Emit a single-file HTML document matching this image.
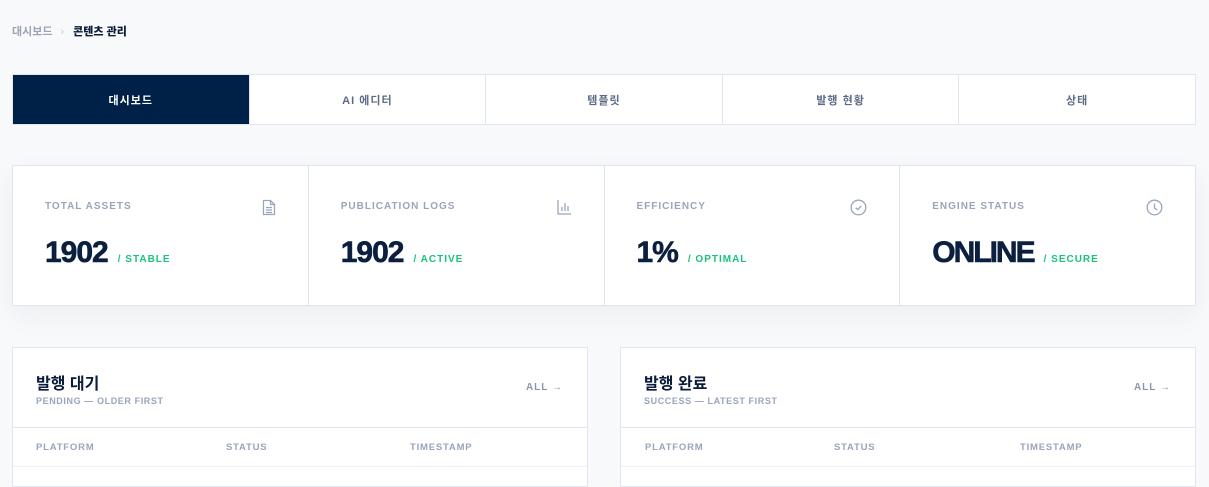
<!DOCTYPE html>
<html><head><meta charset="utf-8"><style>
*{box-sizing:border-box;margin:0;padding:0}
body{width:1209px;height:471px;overflow:hidden;background:#f8f9fb;font-family:"Liberation Sans","Noto Sans CJK KR",sans-serif;position:relative}
.bc{position:absolute;left:12px;top:23px;font-size:11px;font-weight:700;color:#9ba3b5}
.bc b{color:#0b1b3a}
.bc span{color:#c7cdd8;margin:0 9px 0 8px;font-weight:400}
.tabs{position:absolute;left:12px;top:74px;width:1184px;height:51px;border:1px solid #e1e6ee;background:#fff;display:flex}
.tabs div{flex:1;display:flex;align-items:center;justify-content:center;font-size:11px;font-weight:700;color:#5d6a84;border-left:1px solid #e1e6ee;letter-spacing:1px}
.tabs div:first-child{background:#002147;color:#fff;border-left:none}
.stats{position:absolute;left:12px;top:165px;width:1184px;height:141px;border:1px solid #e1e6ee;background:#fff;display:flex;box-shadow:0 10px 25px rgba(30,40,60,.05)}
.st{flex:1;position:relative;border-left:1px solid #e1e6ee}
.st:first-child{border-left:none}
.lab{position:absolute;left:32px;top:35px;font-size:10px;font-weight:700;letter-spacing:1px;color:#9aa4ba}
.ic{position:absolute;right:32px;top:33px}
.val{position:absolute;left:32px;top:70px;font-size:30px;font-weight:700;color:#0b1f3f;letter-spacing:-1px;white-space:nowrap;-webkit-text-stroke:0.6px #0b1f3f}
.val small{font-size:10px;letter-spacing:1px;color:#19c37d;margin-left:10px;font-weight:700;-webkit-text-stroke:0}
.pan{position:absolute;top:347px;width:576px;height:140px;border:1px solid #e1e6ee;background:#fff}
.pan h2{position:absolute;left:23px;top:22px;font-size:16px;font-weight:700;color:#0b1b3a}
.pan .sub{position:absolute;left:23px;top:48px;font-size:9px;font-weight:700;letter-spacing:0.6px;color:#9aa4ba}
.pan .all{position:absolute;right:24px;top:34px;font-size:10px;font-weight:700;letter-spacing:1px;color:#8a96b0}
.pan .hd{position:absolute;left:0;right:0;top:79px;height:40px;border-top:1px solid #e1e6ee;border-bottom:1px solid #eef1f5}
.hd span{position:absolute;top:14px;font-size:9.5px;font-weight:700;letter-spacing:0.8px;color:#9aa4ba}
</style></head><body>
<div class="bc">대시보드<span>›</span><b>콘텐츠 관리</b></div>
<div class="tabs"><div>대시보드</div><div>AI 에디터</div><div>템플릿</div><div>발행 현황</div><div>상태</div></div>
<div class="stats">
<div class="st"><div class="lab">TOTAL ASSETS</div>
<svg class="ic" width="14" height="17" viewBox="0 0 14 17" fill="none" stroke="#9aa4ba" stroke-width="1.3"><path d="M1.5 1.5h7l4 4v10h-11z M8.5 1.5v4h4 M4 8.5h6 M4 11h6 M4 13.5h6"/></svg>
<div class="val">1902<small>/ STABLE</small></div></div>
<div class="st"><div class="lab">PUBLICATION LOGS</div>
<svg class="ic" width="15" height="16" viewBox="0 0 15 16" fill="none" stroke="#9aa4ba" stroke-width="1.3"><path d="M1 1v14h13 M5 12V8 M8 12V4 M11 12V7"/></svg>
<div class="val">1902<small>/ ACTIVE</small></div></div>
<div class="st"><div class="lab">EFFICIENCY</div>
<svg class="ic" width="17" height="17" viewBox="0 0 17 17" fill="none" stroke="#9aa4ba" stroke-width="1.3"><circle cx="8.5" cy="8.5" r="7.3"/><path d="M5.8 8.8l2 1.8 3.5-3.8"/></svg>
<div class="val">1%<small>/ OPTIMAL</small></div></div>
<div class="st"><div class="lab">ENGINE STATUS</div>
<svg class="ic" width="17" height="17" viewBox="0 0 17 17" fill="none" stroke="#9aa4ba" stroke-width="1.3"><circle cx="8.5" cy="8.5" r="7.3"/><path d="M8.5 4.5v4.5l2.8 2"/></svg>
<div class="val" style="letter-spacing:-2px">ONLINE<small>/ SECURE</small></div></div>
</div>
<div class="pan" style="left:12px"><h2>발행 대기</h2><div class="sub">PENDING — OLDER FIRST</div><div class="all">ALL →</div>
<div class="hd"><span style="left:23px">PLATFORM</span><span style="left:213px">STATUS</span><span style="left:397px">TIMESTAMP</span></div></div>
<div class="pan" style="left:620px"><h2>발행 완료</h2><div class="sub">SUCCESS — LATEST FIRST</div><div class="all">ALL →</div>
<div class="hd"><span style="left:24px">PLATFORM</span><span style="left:213px">STATUS</span><span style="left:399px">TIMESTAMP</span></div></div>
</body></html>
